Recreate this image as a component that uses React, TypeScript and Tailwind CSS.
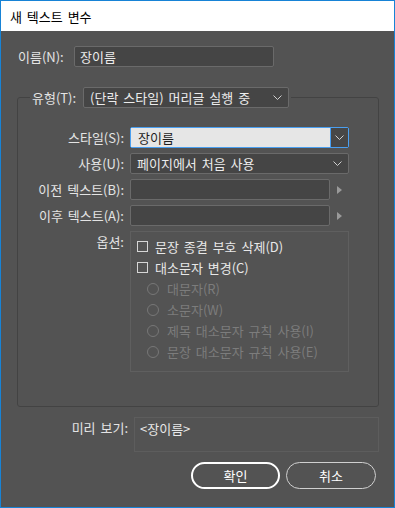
import type { ReactNode } from 'react';

const font = { fontFamily: '"Noto Sans CJK KR", "Noto Sans", sans-serif' };

function Chevron({ color = '#cfcfcf' }: { color?: string }) {
  return (
    <svg width="9" height="5" viewBox="0 0 9 5" fill="none">
      <path d="M0.5 0.5L4.5 4.5L8.5 0.5" stroke={color} strokeWidth="1" />
    </svg>
  );
}

function Arrow() {
  return (
    <svg width="5" height="8" viewBox="0 0 5 8">
      <path d="M0 0L5 4L0 8Z" fill="#9a9a9a" />
    </svg>
  );
}

function Label({ children }: { children: ReactNode }) {
  return <div className="w-[112px] shrink-0 text-right pr-[6px] text-[13px] leading-[15px] text-[#e4e4e4]">{children}</div>;
}

function TextBox({ value, w }: { value?: string; w: string }) {
  return (
    <div className={`${w} h-[21px] rounded-[2px] border border-[#6a6a6a] bg-[#454545] flex items-center pl-[5px] text-[13px] leading-[15px] text-[#ececec]`}>
      {value}
    </div>
  );
}

function DropDown({ value, w }: { value: string; w: string }) {
  return (
    <div className={`${w} h-[21px] rounded-[2px] border border-[#6a6a6a] bg-[#454545] flex items-center justify-between pl-[6px] pr-[6px] text-[13px] leading-[15px] text-[#ececec]`}>
      <span>{value}</span>
      <Chevron />
    </div>
  );
}

function Check({ label }: { label: string }) {
  return (
    <div className="h-[21px] flex items-center gap-[7px] pl-[6px]">
      <div className="w-[11px] h-[11px] border border-[#d6d6d6]" />
      <span className="text-[13px] leading-[15px] text-[#e8e8e8]">{label}</span>
    </div>
  );
}

function Radio({ label }: { label: string }) {
  return (
    <div className="h-[21px] flex items-center gap-[8px] pl-[16px]">
      <div className="w-[12px] h-[12px] rounded-full border border-[#777777]" />
      <span className="text-[13px] leading-[15px] text-[#7c7c7c]">{label}</span>
    </div>
  );
}

export default function App() {
  return (
    <div style={font} className="w-[395px] h-[508px] border border-[#1783d6] bg-[#535353] flex flex-col [word-spacing:2px]">
      <div className="h-[30px] bg-white flex items-center pl-[9px] text-[13px] leading-[15px] text-black">새 텍스트 변수</div>

      <div className="flex flex-col pl-[16px] pr-[15px] pt-[15px]">
        <div className="flex items-center pl-[1px]">
          <div className="w-[56px] text-[13px] leading-[15px] text-[#e4e4e4]">이름(N):</div>
          <TextBox value="장이름" w="w-[200px]" />
        </div>

        <fieldset className="mt-[20px] w-[362px] border border-[#434343] rounded-[3px] pb-[34px]">
          <legend className="ml-[12px] px-[2px]">
            <div className="flex items-center gap-[7px]">
              <span className="text-[13px] leading-[15px] text-[#e4e4e4]">유형(T):</span>
              <DropDown value="(단락 스타일) 머리글 실행 중" w="w-[206px]" />
            </div>
          </legend>

          <div className="flex flex-col gap-[5px] mt-[19px]">
            <div className="flex items-center">
              <Label>스타일(S):</Label>
              <div className="w-[219px] h-[21px] rounded-[2px] border border-[#4a9ff0] flex">
                <div className="flex-1 bg-[#e6e6e6] flex items-center pl-[7px] text-[13px] leading-[15px] text-[#1e1e1e]">장이름</div>
                <div className="w-[18px] bg-[#474747] border-l border-[#4a9ff0] flex items-center justify-center">
                  <Chevron />
                </div>
              </div>
            </div>

            <div className="flex items-center">
              <Label>사용(U):</Label>
              <DropDown value="페이지에서 처음 사용" w="w-[219px]" />
            </div>

            <div className="flex items-center">
              <Label>이전 텍스트(B):</Label>
              <TextBox w="w-[200px]" />
              <div className="ml-[7px] flex items-center"><Arrow /></div>
            </div>

            <div className="flex items-center">
              <Label>이후 텍스트(A):</Label>
              <TextBox w="w-[200px]" />
              <div className="ml-[7px] flex items-center"><Arrow /></div>
            </div>

            <div className="flex items-start">
              <div className="pt-[3px]"><Label>옵션:</Label></div>
              <div className="w-[219px] h-[141px] border border-[#5f5f5f] pt-[4px] flex flex-col">
                <Check label="문장 종결 부호 삭제(D)" />
                <Check label="대소문자 변경(C)" />
                <Radio label="대문자(R)" />
                <Radio label="소문자(W)" />
                <Radio label="제목 대소문자 규칙 사용(I)" />
                <Radio label="문장 대소문자 규칙 사용(E)" />
              </div>
            </div>
          </div>
        </fieldset>

        <div className="flex items-start mt-[10px]">
          <div className="w-[117px] pt-[3px] pr-[6px] text-right text-[13px] leading-[15px] text-[#e4e4e4]">미리 보기:</div>
          <div className="w-[245px] h-[35px] border border-[#5d5d5d] pl-[5px] pt-[3px] text-[13px] leading-[15px] text-[#e8e8e8]">&lt;장이름&gt;</div>
        </div>

        <div className="flex justify-end gap-[6px] mt-[10px] pr-[3px]">
          <div className="w-[89px] h-[27px] rounded-full border-2 border-white flex items-center justify-center text-[13px] leading-[15px] text-white">확인</div>
          <div className="w-[90px] h-[27px] rounded-full border border-[#d0d0d0] flex items-center justify-center text-[13px] leading-[15px] text-white">취소</div>
        </div>
      </div>
    </div>
  );
}
